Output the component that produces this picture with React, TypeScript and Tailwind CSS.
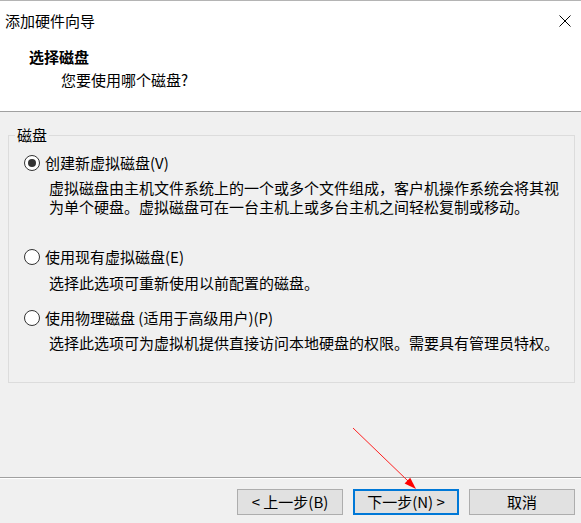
import React from "react"

const FONT = { fontFamily: '"Noto Sans CJK SC", "Noto Sans", sans-serif' }

function Radio({ checked }: { checked?: boolean }) {
  return (
    <span className="flex h-[16px] w-[16px] shrink-0 items-center justify-center rounded-full border border-[#333333] bg-white">
      {checked && <span className="h-[8px] w-[8px] rounded-full bg-[#333333]" />}
    </span>
  )
}

function Button({ label, focused }: { label: string; focused?: boolean }) {
  return (
    <button
      className={
        "flex h-[26px] w-[106px] items-center justify-center bg-[#e1e1e1] text-[15px] leading-[20px] text-black " +
        (focused ? "border-2 border-[#0078d7]" : "border border-[#adadad]")
      }
    >
      {label}
    </button>
  )
}

export default function App() {
  return (
    <div
      className="relative flex h-[523px] w-[581px] flex-col overflow-hidden bg-[#f0f0f0] text-black"
      style={FONT}
    >
      {/* Header */}
      <div className="h-[112px] shrink-0 border-t border-b border-t-[#b4b4b4] border-b-[#a0a0a0] bg-white">
        <div className="flex h-[39px] items-center justify-between pl-[5px] pr-[10px]">
          <span className="text-[15px] leading-[20px]">添加硬件向导</span>
          <svg width="12" height="12" viewBox="0 0 12 12" className="mr-[0px]">
            <path d="M0.5 0.5 L11.5 11.5 M11.5 0.5 L0.5 11.5" stroke="#000" strokeWidth="1" />
          </svg>
        </div>
        <div className="mt-[7px] pl-[29px] text-[15px] font-bold leading-[20px]">选择磁盘</div>
        <div className="mt-[3px] pl-[61px] text-[15px] leading-[20px]">您要使用哪个磁盘?</div>
      </div>

      {/* Body */}
      <div className="flex-1 pt-[13px]">
        <fieldset className="ml-[8px] h-[258px] w-[567px] border border-[#dcdcdc] p-0">
          <legend className="ml-[6px] px-[2px] text-[15px] leading-[20px]">磁盘</legend>
          <div className="pl-[15px] pt-[8px] text-[15px]">
            <label className="flex h-[20px] items-center gap-[5px] leading-[20px]">
              <Radio checked />
              <span>创建新虚拟磁盘(V)</span>
            </label>
            <div className="mt-[5px] pl-[25px] leading-[19px] whitespace-nowrap">
              <div>虚拟磁盘由主机文件系统上的一个或多个文件组成，客户机操作系统会将其视</div>
              <div>为单个硬盘。虚拟磁盘可在一台主机上或多台主机之间轻松复制或移动。</div>
            </div>

            <label className="mt-[31px] flex h-[20px] items-center gap-[5px] leading-[20px]">
              <Radio />
              <span>使用现有虚拟磁盘(E)</span>
            </label>
            <div className="mt-[6px] pl-[25px] leading-[19px] whitespace-nowrap">
              选择此选项可重新使用以前配置的磁盘。
            </div>

            <label className="mt-[16px] flex h-[20px] items-center gap-[5px] leading-[20px]">
              <Radio />
              <span>使用物理磁盘 (适用于高级用户)(P)</span>
            </label>
            <div className="mt-[5px] pl-[25px] leading-[19px] whitespace-nowrap">
              选择此选项可为虚拟机提供直接访问本地硬盘的权限。需要具有管理员特权。
            </div>
          </div>
        </fieldset>
      </div>

      {/* Footer */}
      <div className="h-[46px] shrink-0 border-t border-[#a0a0a0]">
        <div className="flex justify-end gap-[10px] border-t border-white pr-[6px] pt-[10px]">
          <Button label="< 上一步(B)" />
          <Button label="下一步(N) >" focused />
          <Button label="取消" />
        </div>
      </div>

      {/* Annotation arrow */}
      <svg className="pointer-events-none absolute left-0 top-0" width="581" height="523">
        <line x1="353" y1="428" x2="408" y2="481" stroke="#ff2020" strokeWidth="1" />
        <polygon points="416,489 404.6,483.5 410.2,477.8" fill="#ff0000" />
      </svg>
    </div>
  )
}
